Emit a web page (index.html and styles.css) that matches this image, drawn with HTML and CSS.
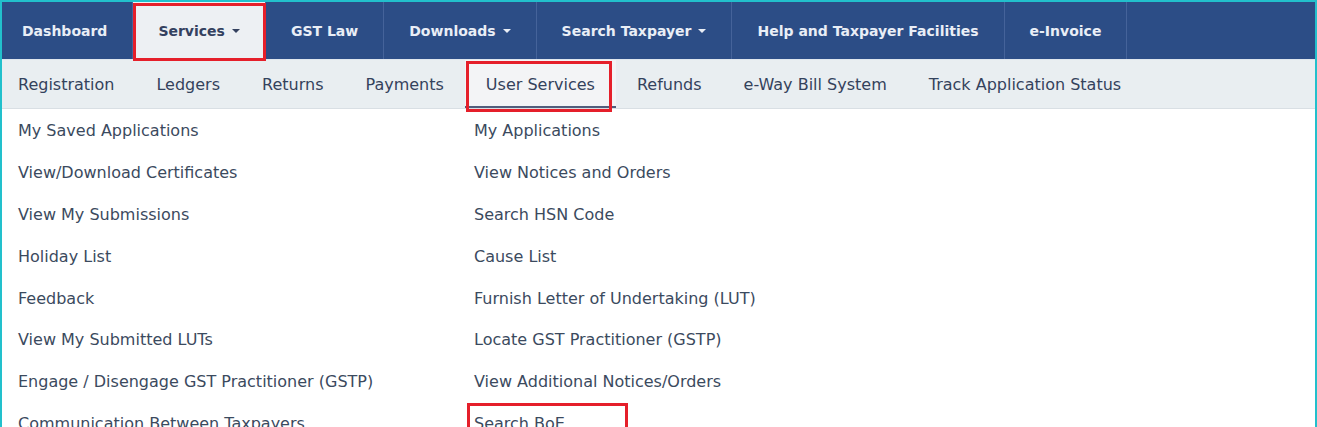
FILE: index.html
```html
<!DOCTYPE html>
<html lang="en">
<head>
    <meta charset="UTF-8">
    <meta name="viewport" content="width=device-width, initial-scale=1.0">
    <title>GST - Services</title>
    <link rel="stylesheet" href="styles.css">
</head>
<body>

    <div class="frame">
        <nav class="main-nav">
            <a href="#">Dashboard</a>
            <a href="#" class="active marked">Services <span class="caret"></span></a>
            <a href="#">GST Law</a>
            <a href="#">Downloads <span class="caret"></span></a>
            <a href="#">Search Taxpayer <span class="caret"></span></a>
            <a href="#">Help and Taxpayer Facilities</a>
            <a href="#">e-Invoice</a>
        </nav>

        <nav class="sub-nav">
            <a href="#">Registration</a>
            <a href="#">Ledgers</a>
            <a href="#">Returns</a>
            <a href="#">Payments</a>
            <a href="#" class="active marked">User Services</a>
            <a href="#">Refunds</a>
            <a href="#">e-Way Bill System</a>
            <a href="#">Track Application Status</a>
        </nav>

        <div class="menu">
            <ul class="menu-col">
                <li><a href="#">My Saved Applications</a></li>
                <li><a href="#">View/Download Certificates</a></li>
                <li><a href="#">View My Submissions</a></li>
                <li><a href="#">Holiday List</a></li>
                <li><a href="#">Feedback</a></li>
                <li><a href="#">View My Submitted LUTs</a></li>
                <li><a href="#">Engage / Disengage GST Practitioner (GSTP)</a></li>
                <li><a href="#">Communication Between Taxpayers</a></li>
            </ul>
            <ul class="menu-col">
                <li><a href="#">My Applications</a></li>
                <li><a href="#">View Notices and Orders</a></li>
                <li><a href="#">Search HSN Code</a></li>
                <li><a href="#">Cause List</a></li>
                <li><a href="#">Furnish Letter of Undertaking (LUT)</a></li>
                <li><a href="#">Locate GST Practitioner (GSTP)</a></li>
                <li><a href="#">View Additional Notices/Orders</a></li>
                <li class="marked"><a href="#">Search BoE</a></li>
            </ul>
        </div>
    </div>

</body>
</html>
```

FILE: styles.css
```css
/* General Styles */
html, body {
    overflow: hidden;
}

body {
    font-family: 'DejaVu Sans', Verdana, sans-serif;
    margin: 0;
    padding: 0;
    background-color: #fff;
    color: #3b4a5e;
}

a {
    text-decoration: none;
}

.frame {
    border: 2px solid #22c0cc;
    border-bottom: none;
}

/* Main navigation */
.main-nav {
    display: flex;
    height: 57px;
    background-color: #2c4d86;
}

.main-nav a {
    display: flex;
    align-items: center;
    padding: 0 25px;
    font-size: 14px;
    font-weight: bold;
    color: #e9eef6;
    border-right: 1px solid #45639a;
}

.main-nav a:first-child {
    padding-left: 20px;
}

.main-nav a.active {
    background-color: #edf0f3;
    color: #34415f;
}

.caret {
    display: inline-block;
    margin-left: 7px;
    border-top: 4px solid currentColor;
    border-left: 4px solid transparent;
    border-right: 4px solid transparent;
}

/* Sub navigation */
.sub-nav {
    display: flex;
    height: 48px;
    background-color: #e9eef1;
    border-top: 1px solid #dfe6ee;
    border-bottom: 1px solid #d9dfe4;
}

.sub-nav a {
    display: flex;
    align-items: center;
    padding: 0 21px;
    font-size: 16px;
    color: #34425c;
}

.sub-nav a:first-child {
    padding-left: 16px;
}

.sub-nav a.active {
    background-color: #f3f4f6;
    box-shadow: inset 0 -2px 0 #515d7c;
}

/* Menu */
.menu {
    display: grid;
    grid-template-columns: 456px 1fr;
    padding-top: 1px;
}

.menu-col {
    list-style: none;
    margin: 0;
    padding: 0;
}

.menu-col li {
    height: 41.8px;
    display: flex;
    align-items: center;
    padding-left: 16px;
    font-size: 16px;
}

.menu-col a {
    color: #3b4a5e;
}

/* Red annotation boxes */
.marked {
    position: relative;
}

.marked::after {
    content: "";
    position: absolute;
    border: 3px solid #e51f2a;
    pointer-events: none;
}

.main-nav .marked::after {
    left: 0;
    right: -1px;
    top: 1px;
    bottom: -2px;
}

.sub-nav .marked::after {
    left: 1px;
    right: 4px;
    top: 1px;
    bottom: -4px;
}

.menu-col .marked::after {
    left: 9px;
    width: 155px;
    top: 0;
    bottom: -20px;
}
```
